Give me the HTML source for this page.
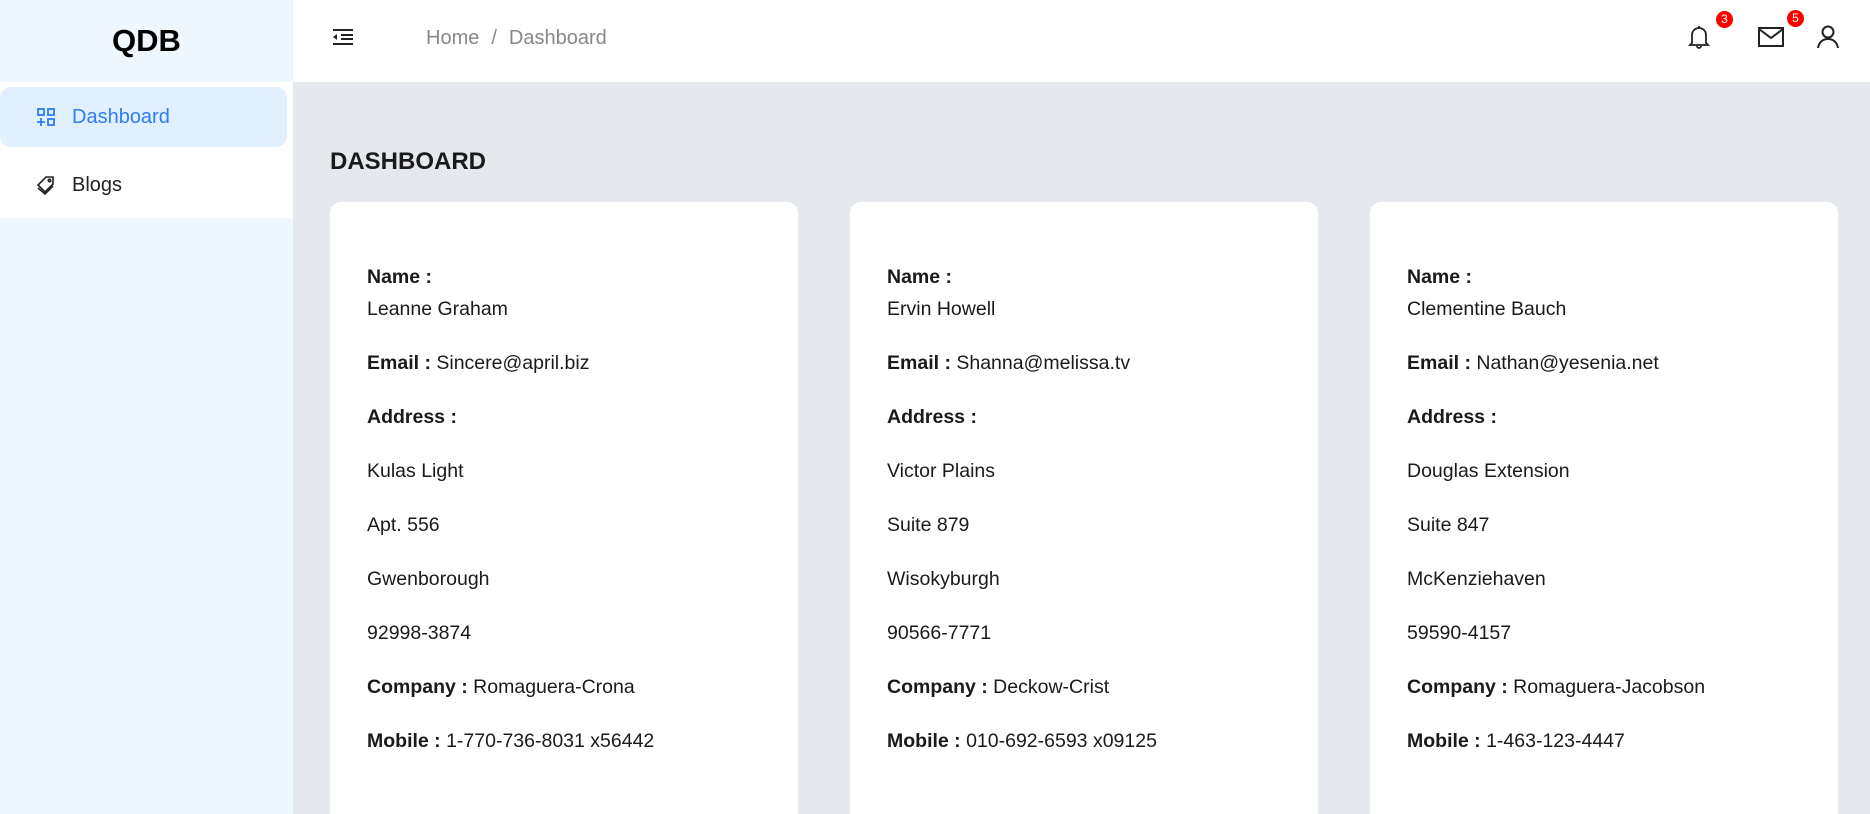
<!DOCTYPE html>
<html style="width:1870px;height:814px;overflow:hidden"><head><meta charset="utf-8"><style>
*{box-sizing:border-box;margin:0;padding:0}
body{width:1870px;height:814px;overflow:hidden;font-family:"Liberation Sans",sans-serif;background:#e5e8ed;position:relative;color:#1a1a1a}
.side{position:absolute;left:0;top:0;width:293px;height:814px;background:#eef6fe}
.logo{position:absolute;left:0;top:0;width:293px;height:82px;display:flex;align-items:center;justify-content:center;font-weight:bold;font-size:31px;color:#000}
.menu{position:absolute;left:0;top:82px;width:293px;height:136px;background:#fff}
.item{position:absolute;left:0;width:287px;height:60px;display:flex;align-items:center;padding-left:36px;font-size:20px}
.item svg{margin-right:16px}
.act{top:5px;background:#e1f0fe;border-radius:11px;color:#2f7cf6}
.blg{top:73px;color:#222}
.hdr{position:absolute;left:293px;top:0;width:1577px;height:82px;background:#fff}
.bc{position:absolute;left:133px;top:27px;font-size:20px;color:#888}
.bc span{margin:0 12px}
.title{position:absolute;left:330px;top:148px;font-size:24px;font-weight:bold;color:#1a1a1a}
.card{position:absolute;top:202px;width:468px;height:612px;background:#fff;border-radius:11px 11px 0 0;padding:62px 0 0 37px;font-size:19.5px}
.card p{height:54px;line-height:26px;margin:0}
.card p.n{height:32px}
b{font-weight:bold}
.badge{position:absolute;width:17px;height:17px;border-radius:50%;background:#f00;color:#fff;font-size:12px;text-align:center;line-height:17px}
</style></head><body>
<div class="side">
<div class="logo">QDB</div>
<div class="menu">
<div class="item act"><svg width="20" height="20" viewBox="0 0 20 20" fill="none" stroke="#2f7cf6" stroke-width="1.8"><rect x="2" y="2" width="6" height="6"/><rect x="12" y="2" width="6" height="6"/><rect x="12" y="12" width="6" height="6"/><path d="M5 11v8M1 15h8"/></svg>Dashboard</div>
<div class="item blg"><svg width="20" height="20" viewBox="0 0 20 20" fill="none" stroke="#222" stroke-width="1.6"><path d="M10 2h7v7l-8 8-7-7z"/><circle cx="13.5" cy="5.5" r="1.2"/><path d="M2 13l7 6 8-8"/></svg>Blogs</div>
</div>
</div>
<div class="hdr">
<svg style="position:absolute;left:39px;top:28px" width="22" height="18" viewBox="0 0 22 18" fill="none" stroke="#222" stroke-width="2"><path d="M1 2h20M9 7h12M9 11h12M1 16h20"/><path d="M5 6v6L1 9z" fill="#222" stroke="none"/></svg>
<div class="bc">Home<span>/</span>Dashboard</div>
<svg style="position:absolute;left:1395px;top:24px" width="22" height="26" viewBox="0 0 22 26" fill="none" stroke="#222" stroke-width="1.8"><path d="M4 19V11a7 7 0 0 1 14 0v8l2 2H2z"/><path d="M11 2v2M9 22a2 2 0 0 0 4 0"/></svg>
<div class="badge" style="left:1423px;top:11px">3</div>
<svg style="position:absolute;left:1465px;top:27px" width="26" height="20" viewBox="0 0 26 20" fill="none" stroke="#222" stroke-width="2"><rect x="1" y="1" width="24" height="18"/><path d="M1 2l12 9 12-9"/></svg>
<div class="badge" style="left:1494px;top:10px">5</div>
<svg style="position:absolute;left:1524px;top:25px" width="22" height="24" viewBox="0 0 22 24" fill="none" stroke="#222" stroke-width="2"><circle cx="11" cy="7" r="5.5"/><path d="M1 23c1-6 5-9 10-9s9 3 10 9"/></svg>
</div>
<div class="title">DASHBOARD</div>
<div class="card" style="left:330px"><p class="n"><b>Name :</b></p><p>Leanne Graham</p><p><b>Email :</b> Sincere@april.biz</p><p><b>Address :</b></p><p>Kulas Light</p><p>Apt. 556</p><p>Gwenborough</p><p>92998-3874</p><p><b>Company :</b> Romaguera-Crona</p><p><b>Mobile :</b> 1-770-736-8031 x56442</p></div>
<div class="card" style="left:850px"><p class="n"><b>Name :</b></p><p>Ervin Howell</p><p><b>Email :</b> Shanna@melissa.tv</p><p><b>Address :</b></p><p>Victor Plains</p><p>Suite 879</p><p>Wisokyburgh</p><p>90566-7771</p><p><b>Company :</b> Deckow-Crist</p><p><b>Mobile :</b> 010-692-6593 x09125</p></div>
<div class="card" style="left:1370px"><p class="n"><b>Name :</b></p><p>Clementine Bauch</p><p><b>Email :</b> Nathan@yesenia.net</p><p><b>Address :</b></p><p>Douglas Extension</p><p>Suite 847</p><p>McKenziehaven</p><p>59590-4157</p><p><b>Company :</b> Romaguera-Jacobson</p><p><b>Mobile :</b> 1-463-123-4447</p></div>
</body></html>
